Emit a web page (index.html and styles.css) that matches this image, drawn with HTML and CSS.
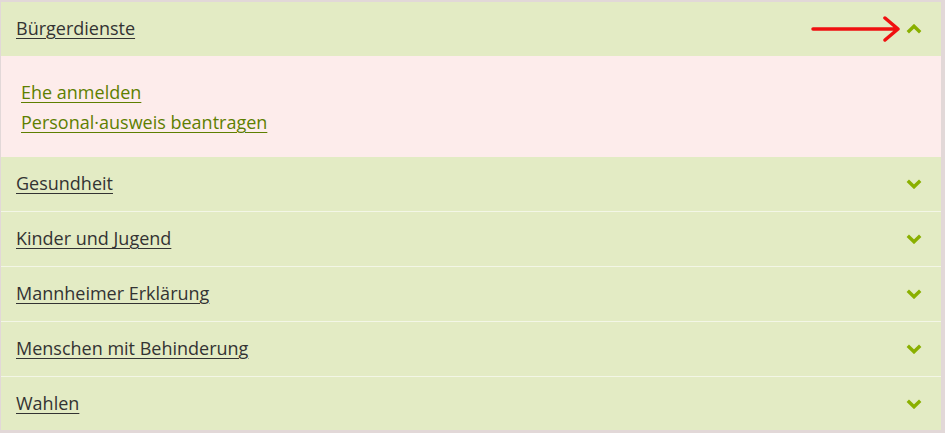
FILE: index.html
```html
<!DOCTYPE html>
<html lang="de">
<head>
<meta charset="utf-8">
<link rel="stylesheet" href="styles.css">
</head>
<body>
<div class="accordion">
  <div class="item open">
    <div class="head">
      <a href="#" class="title">Bürgerdienste</a>
      <span class="marker">
        <svg class="arrow" width="92" height="26" viewBox="0 0 92 26"><path d="M2 13 H86 M74 2 L87 13 L74 24" fill="none" stroke="#f01010" stroke-width="3.5" stroke-linecap="round" stroke-linejoin="round"/></svg>
      </span>
      <svg class="chev" width="16" height="10" viewBox="0 0 16 10"><path d="M1.8 8.2 L8 2.2 L14.2 8.2" fill="none" stroke="#8ab000" stroke-width="3.4"/></svg>
    </div>
    <div class="body">
      <a href="#">Ehe anmelden</a>
      <a href="#">Personal·ausweis beantragen</a>
    </div>
  </div>
  <div class="item">
    <div class="head"><a href="#" class="title">Gesundheit</a><svg class="chev" width="16" height="10" viewBox="0 0 16 10"><path d="M1.8 1.8 L8 7.8 L14.2 1.8" fill="none" stroke="#8ab000" stroke-width="3.4"/></svg></div>
  </div>
  <div class="item">
    <div class="head"><a href="#" class="title">Kinder und Jugend</a><svg class="chev" width="16" height="10" viewBox="0 0 16 10"><path d="M1.8 1.8 L8 7.8 L14.2 1.8" fill="none" stroke="#8ab000" stroke-width="3.4"/></svg></div>
  </div>
  <div class="item">
    <div class="head"><a href="#" class="title">Mannheimer Erklärung</a><svg class="chev" width="16" height="10" viewBox="0 0 16 10"><path d="M1.8 1.8 L8 7.8 L14.2 1.8" fill="none" stroke="#8ab000" stroke-width="3.4"/></svg></div>
  </div>
  <div class="item">
    <div class="head"><a href="#" class="title">Menschen mit Behinderung</a><svg class="chev" width="16" height="10" viewBox="0 0 16 10"><path d="M1.8 1.8 L8 7.8 L14.2 1.8" fill="none" stroke="#8ab000" stroke-width="3.4"/></svg></div>
  </div>
  <div class="item">
    <div class="head"><a href="#" class="title">Wahlen</a><svg class="chev" width="16" height="10" viewBox="0 0 16 10"><path d="M1.8 1.8 L8 7.8 L14.2 1.8" fill="none" stroke="#8ab000" stroke-width="3.4"/></svg></div>
  </div>
</div>
</body>
</html>
```
FILE: styles.css
```css
html, body { margin: 0; padding: 0; }
body {
  background: #e2d8d8;
  padding: 2px 4px 4px 1px;
  height: 433px;
  box-sizing: border-box;
  font-family: "Open Sans", "Noto Sans", sans-serif;
}
.accordion {
  background: #e3ebc4;
  display: flex;
  flex-direction: column;
}
.item + .item { border-top: 1px solid #f3f6e6; }
.open + .item { border-top: 0; }
.head {
  height: 54px;
  display: flex;
  align-items: center;
  padding: 0 19px 0 15px;
  position: relative;
}
.title {
  flex: 1;
  color: #333333;
  font-size: 18px;
  line-height: 24px;
  margin-top: -2px;
  text-decoration: underline;
  text-underline-offset: 3px;
  text-decoration-thickness: 1px;
}
.item:last-child .head { height: 53px; }
.chev { display: block; }
.marker { position: absolute; right: 38px; top: 14px; }
.arrow { display: block; }
.body {
  background: #fdeceb;
  height: 101px;
  box-sizing: border-box;
  padding: 24px 20px 0;
  display: flex;
  flex-direction: column;
  gap: 6px;
}
.body a {
  align-self: flex-start;
  color: #5e7f00;
  font-size: 18px;
  line-height: 24px;
  text-decoration: underline;
  text-underline-offset: 3px;
  text-decoration-thickness: 1px;
}
```
